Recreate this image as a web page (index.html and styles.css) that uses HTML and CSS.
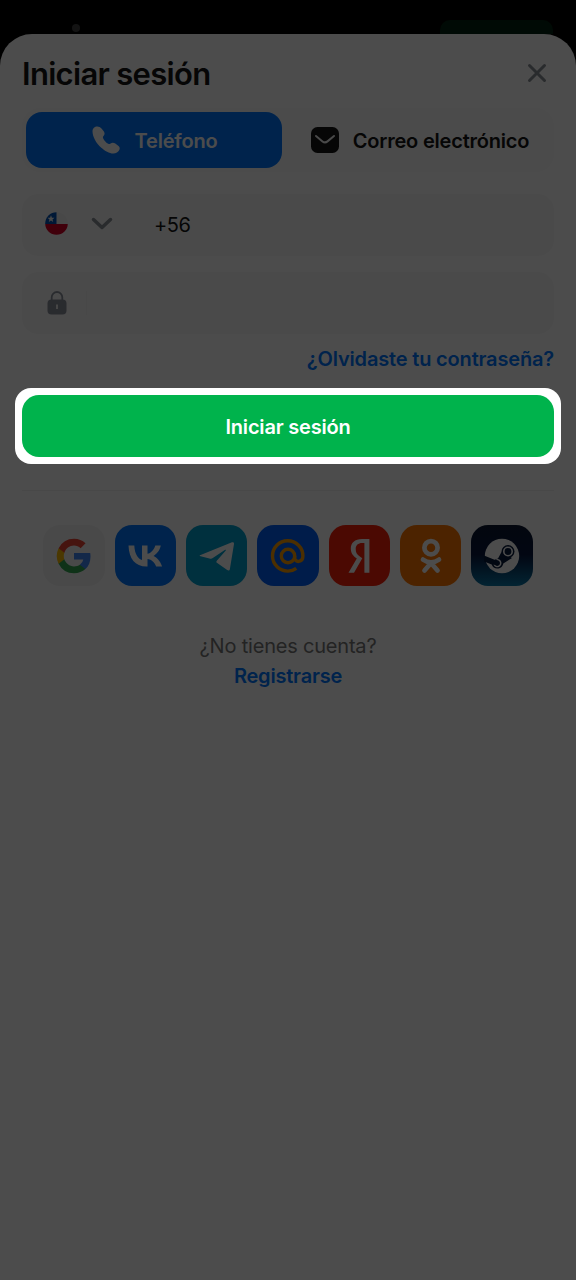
FILE: index.html
```html
<!DOCTYPE html>
<html lang="es">
<head>
<meta charset="utf-8">
<title>Iniciar sesión</title>
<link rel="stylesheet" href="styles.css">
</head>
<body>
<div class="page">
  <header class="topbar"><span class="dot"></span><span class="topbar-button"></span></header>
  <main class="sheet">
    <div class="heading">
      <h1 class="title">Iniciar sesión</h1>
      <svg class="close" width="20" height="20" viewBox="0 0 20 20"><path d="M2.500 2.500 17.500 17.500M17.500 2.500 2.500 17.500" fill="none" stroke="currentColor" stroke-width="3" stroke-linecap="round"/></svg>
    </div>
    <div class="tabs">
      <div class="tab tab-active">
        <svg width="30" height="30" viewBox="0 0 30 30"><path d="M6.200 1.500C3.800 1.500 1.500 3.400 1.500 6.200c0 5.400 3.500 11.800 8.800 16.500 3.400 3 8 5.800 12 5.800 2.500 0 5.200-1.600 6.200-4.100.5-1.400.1-2.600-1-3.500l-3.200-2.300c-1.600-1.200-3.200-1.200-4.700-.2-1.500 1-2.100.9-3.300-.1-1.500-1.300-2.900-2.900-3.800-4.400-.8-1.200-.8-1.900.2-3.100 1.100-1.300 1.200-2.600.2-4.200L10.500 3.600c-1-1.400-2.500-2.100-4.300-2.100z" fill="currentColor"/></svg>
        <span class="tab-label">Teléfono</span>
      </div>
      <div class="tab tab-mail">
        <svg width="28" height="26" viewBox="0 0 28 26"><rect width="28" height="26" rx="6.500" fill="currentColor"/><path d="m5 9 6.500 5.400a4 4 0 0 0 5 0L23 9" fill="none" stroke="#f5f5f5" stroke-width="2" stroke-linecap="round"/></svg>
        <span class="tab-label">Correo electrónico</span>
      </div>
    </div>
    <div class="field phone">
      <svg class="flag" width="23" height="23" viewBox="0 0 23 23"><defs><clipPath id="flag"><circle cx="11.500" cy="11.500" r="11.300"/></clipPath></defs><g clip-path="url(#flag)"><path d="M0 0h23v12H0z" fill="#f0f0f0"/><path d="M0 0h11.500v12H0z" fill="#0052b4"/><path d="M0 12h23v11H0z" fill="#d80027"/></g><path d="m6 3.300.95 2.400 2.550.15-2 1.650.7 2.500L6 8.600 3.800 10l.7-2.500-2-1.650 2.550-.15z" fill="#f0f0f0"/></svg>
      <svg class="chevron" width="22" height="14" viewBox="0 0 22 14"><path d="m2.500 2.500 8.500 8 8.500-8" fill="none" stroke="currentColor" stroke-width="3.500" stroke-linecap="round" stroke-linejoin="round"/></svg>
      <span class="prefix">+56</span>
    </div>
    <div class="field password">
      <svg class="lock" width="20" height="24" viewBox="0 0 20 24"><path d="M4.700 10V6.300a5.300 5.300 0 0 1 10.600 0V10" fill="none" stroke="currentColor" stroke-width="1.800"/><rect x=".5" y="8.500" width="19" height="15" rx="4" fill="currentColor"/><path d="M10 13.500v4.500" stroke="#f5f5f5" stroke-width="1.800"/></svg>
      <span class="separator"></span>
    </div>
    <a class="forgot">¿Olvidaste tu contraseña?</a>
    <div class="spotlight"><button class="submit">Iniciar sesión</button></div>
    <div class="divider"></div>
    <div class="socials">
      <span class="social google"><svg width="36" height="36" viewBox="0 0 48 48"><path fill="#4285f4" d="M46 24.500c0-1.600-.1-3.100-.4-4.500H24v8.700h12.400a10.600 10.600 0 0 1-4.600 7v5.700h7.400C43.500 37.400 46 31.500 46 24.500z"/><path fill="#34a853" d="M24 47c6.200 0 11.400-2 15.200-5.600l-7.400-5.700c-2 1.400-4.700 2.200-7.800 2.200-6 0-11-4-12.900-9.500H3.500v5.900A23 23 0 0 0 24 47z"/><path fill="#fbbc04" d="M11.100 28.400a13.600 13.600 0 0 1 0-8.800v-5.900H3.500a23 23 0 0 0 0 20.600z"/><path fill="#ea4335" d="M24 10.100c3.400 0 6.400 1.200 8.800 3.400l6.600-6.500A22 22 0 0 0 24 1 23 23 0 0 0 3.500 13.700l7.600 5.900C13 14.100 18 10.100 24 10.100z"/></svg></span>
      <span class="social vk"><svg width="35" height="22" viewBox="0 0 35 22"><path d="M18.500 21.500C7 21.500 1 13.700.5.500h5.800c.4 9.600 4.500 13.700 7.700 14.500V.5h5.500v8.300c3.200-.4 6.700-4.200 7.800-8.300h5.500c-.9 5.100-4.600 8.900-7.300 10.400 2.700 1.300 6.900 4.500 8.600 10.600h-6c-1.300-4-4.500-7-8.600-7.500v7.500z" fill="currentColor"/></svg></span>
      <span class="social telegram"><svg width="36" height="32" viewBox="0 0 36 32"><path d="M1.600 14.900 33 2.300c1.200-.5 2.200.2 2 1.600l-4.100 25c-.3 1.600-1.300 2-2.700 1.200l-10-7c-1.100-.8-1.100-1.700-.2-2.700l8.600-9.700c.6-.8.100-1.200-.8-.6l-12 8c-1 .7-2.200.7-3.400.3l-8.800-2.200c-1.300-.4-1.300-.9 0-1.300z" fill="currentColor"/></svg></span>
      <span class="social mail"><svg width="36" height="36" viewBox="0 0 36 36"><g fill="none" stroke="currentColor" stroke-width="3.400"><circle cx="18" cy="18" r="6.700"/><path d="M24.700 18v2c0 5 8.200 4.700 8.200-2A15.200 15.200 0 1 0 18 33.100c3.200 0 6-1 8.300-2.700"/></g></svg></span>
      <span class="social yandex"><svg width="24" height="36" viewBox="0 0 24 36"><path d="M17.400 34.800h5V1h-7.300C7.700 1 3.800 4.900 3.800 10.600c0 4.500 2.100 7.200 6 10L1.500 34.800H7l8.300-14.500-2.800-2C9.800 16.300 8.700 14.500 8.700 10.800c0-3.500 2.400-5.800 6.400-5.800h2.300z" fill="currentColor"/></svg></span>
      <span class="social ok"><svg width="24" height="36" viewBox="0 0 24 36"><g fill="none" stroke="currentColor" stroke-width="4.700" stroke-linecap="round" stroke-linejoin="round"><circle cx="12" cy="9.700" r="6.600"/><path d="M4 21.600c5 3.500 11 3.500 16 0M12 25l-6.500 7.500M12 25l6.500 7.500"/></g></svg></span>
      <span class="social steam"><svg width="36" height="36" viewBox="0 0 36 36"><circle cx="18" cy="18" r="17.200" fill="currentColor"/><path d="M0 17.500 10.500 21.800 14 20.500 17.500 14l10.500 6-8.700 5.500c-.5 3-3 5-6 5a6 6 0 0 1-5.600-4L0 23.500z" fill="#06183b"/><circle cx="24" cy="13.500" r="6.500" fill="#06183b"/><circle cx="24" cy="13.500" r="4.200" fill="none" stroke="currentColor" stroke-width="1.600"/><path d="m9.500 26.500 2 .8a2.800 2.800 0 1 0 2.100-5l-2-.8a4.100 4.100 0 1 1-2.100 5z" fill="currentColor"/></svg></span>
    </div>
    <div class="signup"><span>¿No tienes cuenta?</span><a class="register">Registrarse</a></div>
  </main>
  <div class="overlay"></div>
</div>
</body>
</html>
```
FILE: styles.css
```css
* { box-sizing: border-box; }
body { margin: 0; background: #000; font-family: Inter, "Liberation Sans", sans-serif; }
svg { display: block; flex: none; }
.page { position: relative; height: 1280px; overflow: hidden; display: flex; flex-direction: column; }
.overlay { position: absolute; inset: 0; background: rgba(0, 0, 0, .7); z-index: 1; }
.topbar { height: 34px; flex: none; display: flex; justify-content: space-between; align-items: flex-end; padding: 0 23px 0 72px; }
.dot { width: 8px; height: 8px; margin-bottom: 2px; border-radius: 50%; background: #404040; }
.topbar-button { width: 113px; height: 14px; border-radius: 10px 10px 0 0; background: #002411; }
.sheet { flex: 1; background: #fff; border-radius: 32px 32px 0 0; padding: 21px 22px 0; color: #141414; display: flex; flex-direction: column; }
.heading { height: 38px; display: flex; justify-content: space-between; align-items: center; padding-right: 7px; }
.title { margin: 0; font-size: 31px; font-weight: 600; line-height: 38px; letter-spacing: -.69px; }
.close { color: #8b9097; margin-top: -3px; }
.tabs { height: 64px; margin-top: 15px; padding: 4px; border-radius: 18px; background: #fbfbfb; display: flex; font-size: 20px; font-weight: 600; letter-spacing: -.2px; }
.tab { flex: 1; display: flex; align-items: center; justify-content: center; gap: 14px; white-space: nowrap; }
.tab-active { flex: 0 0 256px; background: #0077ff; color: #fff; border-radius: 16px; }
.tab-mail { padding-left: 8px; }
.tab-label { padding-top: 2px; }
.field { height: 62px; border-radius: 16px; background: #f9f9f9; display: flex; align-items: center; padding-left: 23px; }
.phone { margin-top: 22px; }
.password { margin-top: 16px; }
.flag { margin-bottom: 3px; }
.chevron { margin: 0 0 2px 23px; color: #8b9097; }
.prefix { margin-left: 41px; font-size: 20px; letter-spacing: -.4px; }
.lock { margin-left: 2px; margin-bottom: 1px; color: #8b909c; }
.separator { width: 1px; height: 24px; margin-left: 19px; background: #f0f0f0; }
.forgot { align-self: flex-end; margin-top: 13px; font-size: 20px; line-height: 24px; font-weight: 600; letter-spacing: -.17px; color: #0077ff; }
.spotlight { position: relative; z-index: 2; height: 76px; margin: 17px -7px 0; padding: 7px; border-radius: 16px; background: #fff; display: flex; }
.submit { flex: 1; padding: 1px 0 0; border: 0; border-radius: 17px; background: #00b34c; color: #fff; font: 600 20px Inter, "Liberation Sans", sans-serif; letter-spacing: -.2px; }
.divider { height: 1px; margin-top: 26px; background: #f2f2f2; }
.socials { display: flex; justify-content: center; gap: 10px; margin-top: 34px; }
.social { width: 61.3px; height: 61.3px; flex: none; border-radius: 17px; display: flex; align-items: center; justify-content: center; color: #fff; }
.google { background: #f5f5f5; }
.vk { background: #0077ff; }
.telegram { background: #00a0cf; }
.mail { background: #005ff9; color: #ff9e00; }
.yandex { background: #fc2008; }
.ok { background: #ff7700; }
.steam { background: linear-gradient(#0a1730, #07143d 48%, #0878a8); }
.signup { margin-top: 45px; display: flex; flex-direction: column; align-items: center; font-size: 20px; line-height: 30px; letter-spacing: -.2px; color: #777; }
.register { font-weight: 600; color: #0077ff; }
```
